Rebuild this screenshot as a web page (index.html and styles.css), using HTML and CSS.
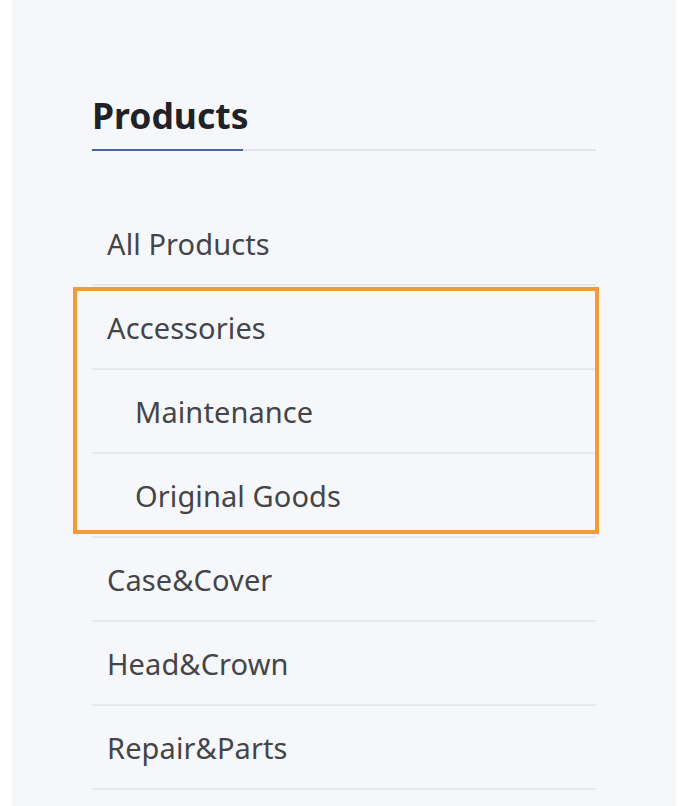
FILE: index.html
```html
<!DOCTYPE html>
<html>
<head>
<meta charset="utf-8">
<link rel="stylesheet" href="styles.css">
</head>
<body>
<div class="page">
  <aside class="panel">
    <h2 class="title">Products</h2>
    <ul class="menu">
      <li class="item">All Products</li>
      <li class="group">
        <ul class="menu">
          <li class="item">Accessories</li>
          <li class="item sub">Maintenance</li>
          <li class="item sub">Original Goods</li>
        </ul>
        <div class="highlight"></div>
      </li>
      <li class="item">Case&amp;Cover</li>
      <li class="item">Head&amp;Crown</li>
      <li class="item">Repair&amp;Parts</li>
    </ul>
  </aside>
</div>
</body>
</html>
```
FILE: styles.css
```css
* { box-sizing: border-box; }
html, body { margin: 0; padding: 0; background: #ffffff; }
body { font-family: "Noto Sans", "Liberation Sans", sans-serif; }
.page { padding-left: 12px; padding-right: 4px; height: 806px; overflow: hidden; }
.panel {
  background: #f6f7fb;
  height: 806px;
  padding: 93px 80px 0 80px;
}
.title {
  position: relative;
  margin: 0;
  font-size: 35.5px;
  font-weight: 700;
  color: #1f2327;
  border-bottom: 2px solid #e3e4ea;
  padding-bottom: 12px;
  line-height: 44px;
}
.title::after {
  content: "";
  position: absolute;
  left: 0;
  bottom: -2px;
  width: 151px;
  height: 2px;
  background: #4a65a0;
}
.menu { list-style: none; margin: 0; padding: 0; }
.panel > .menu { margin-top: 51px; }
.item {
  height: 84px;
  border-bottom: 2px solid #e7e8ee;
  display: flex;
  align-items: center;
  padding-left: 15px;
  font-size: 29px;
  letter-spacing: 0.1px;
  color: #444548;
}
.item.sub { padding-left: 43px; }
.group { position: relative; }
.highlight {
  position: absolute;
  left: -19px;
  right: -3px;
  top: 1px;
  height: 247px;
  border: 4.5px solid #f39b37;
  pointer-events: none;
}
```
